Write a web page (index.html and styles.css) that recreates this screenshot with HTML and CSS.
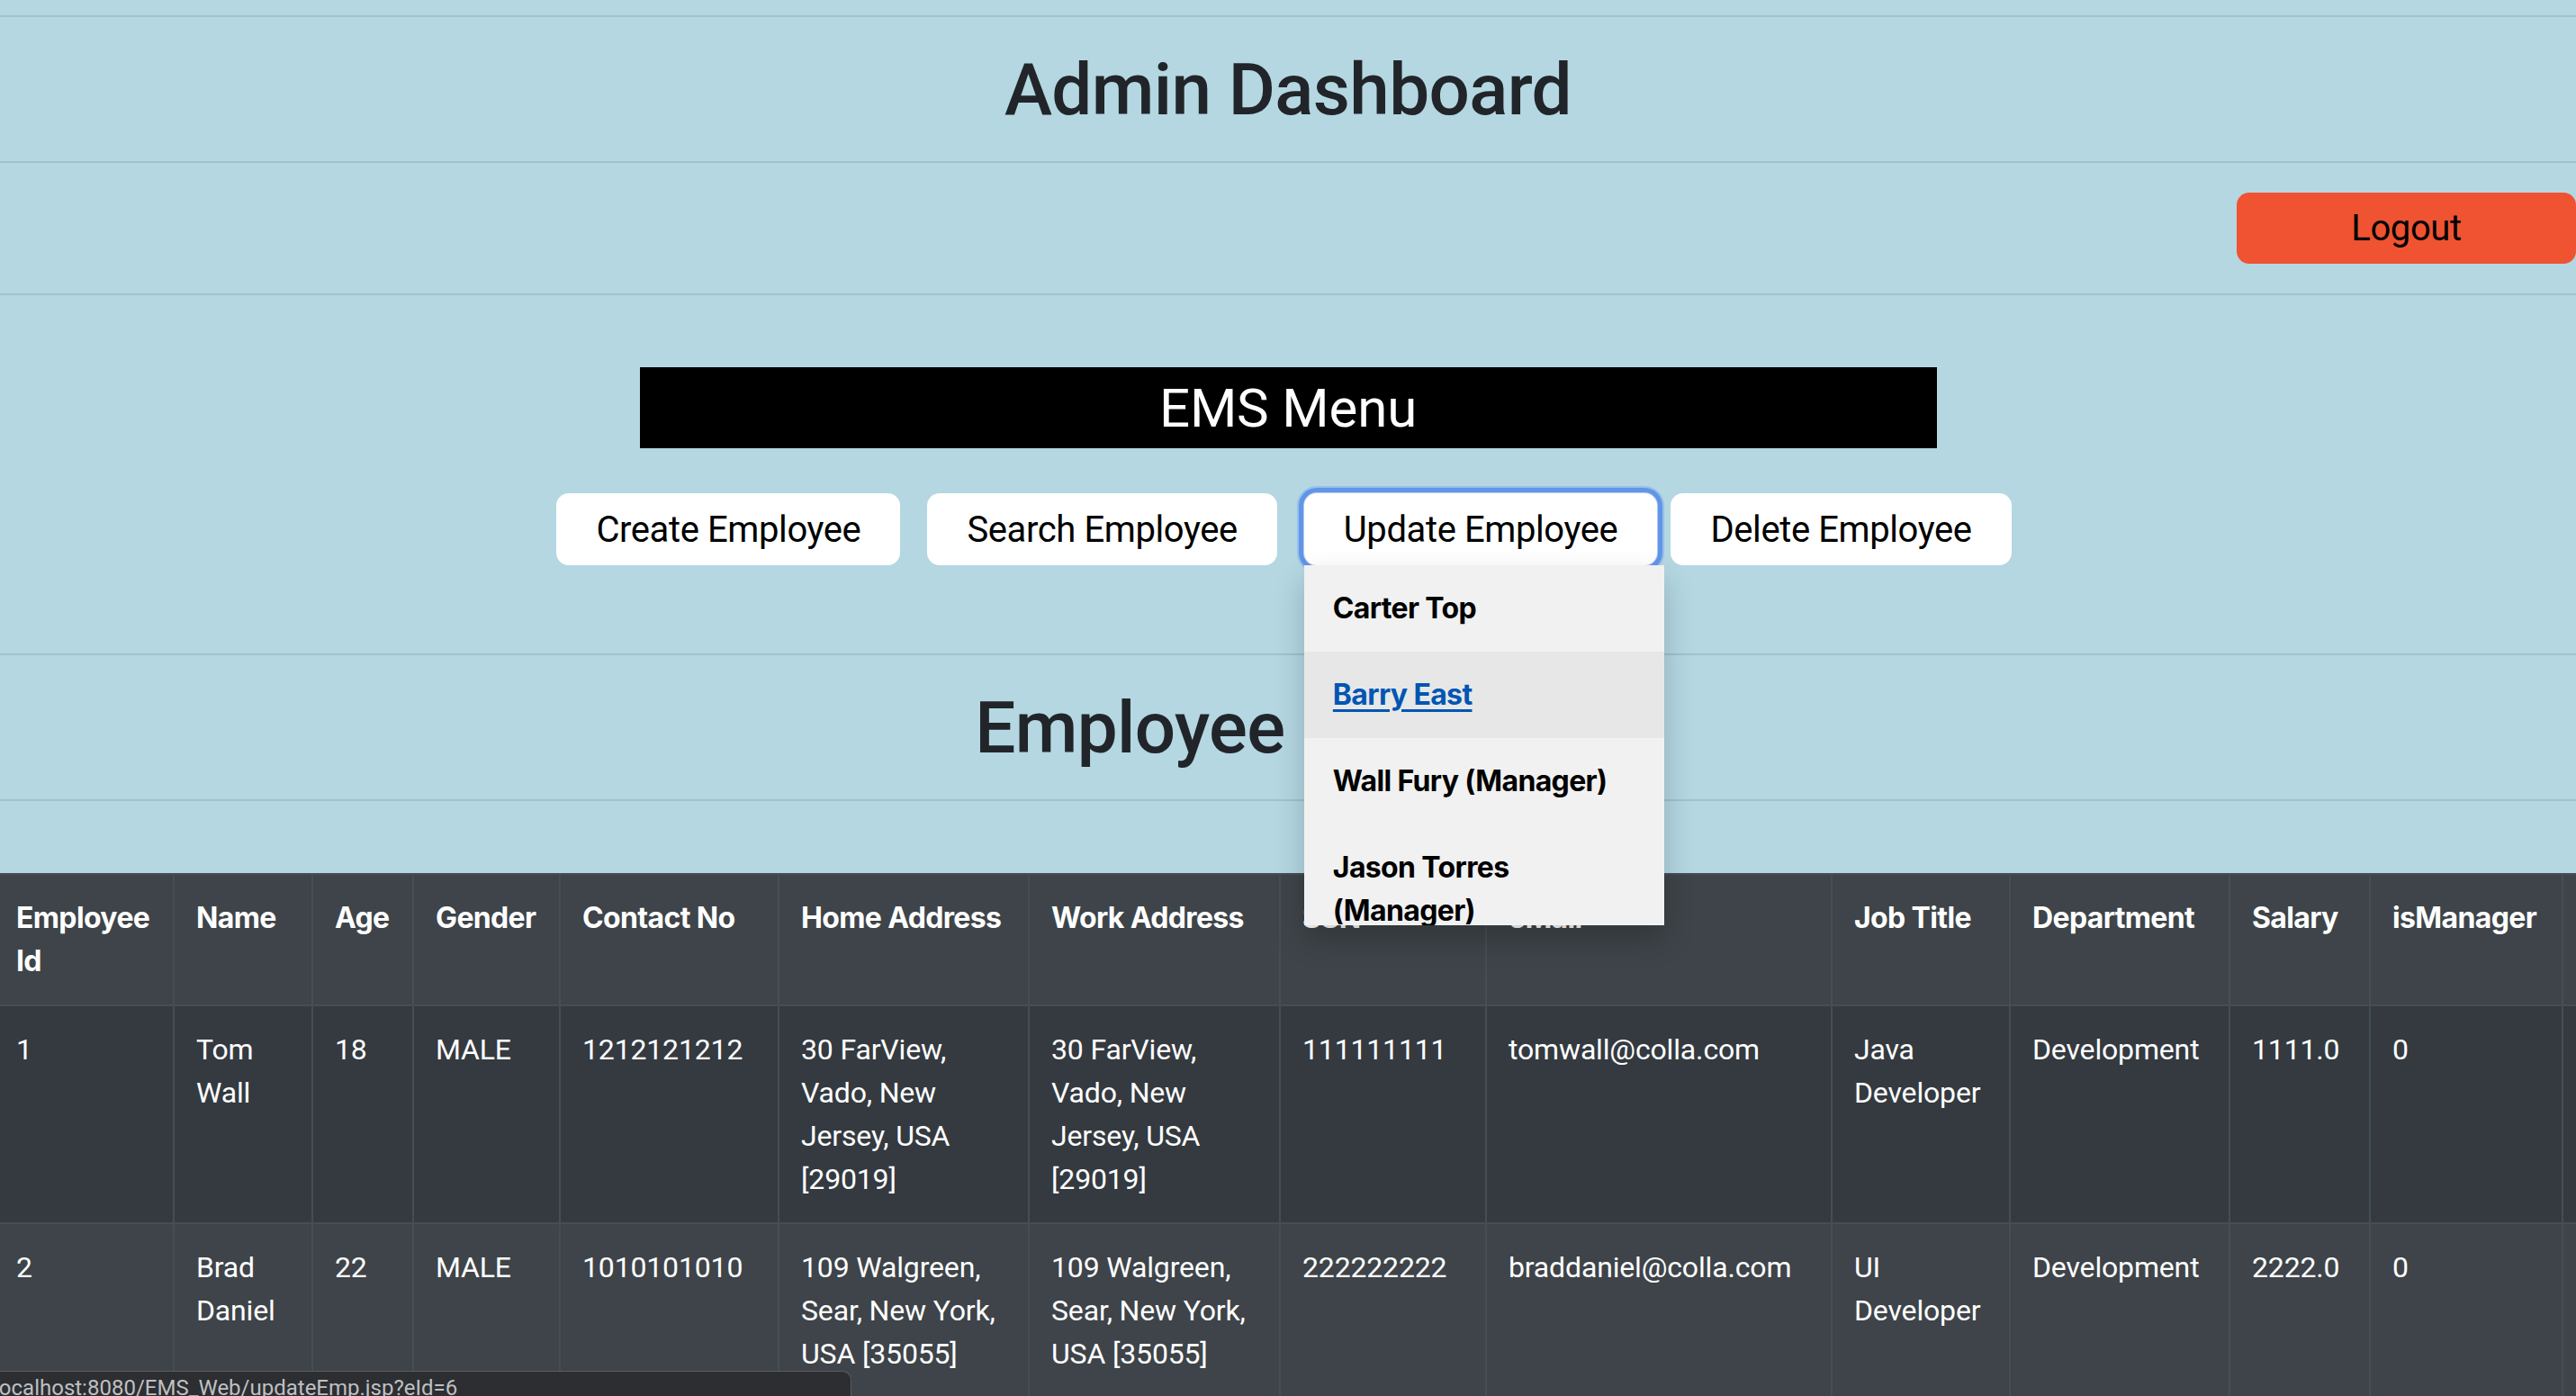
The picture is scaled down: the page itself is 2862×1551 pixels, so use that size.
FILE: index.html
```html
<!DOCTYPE html>
<html lang="en">
<head>
<meta charset="utf-8">
<title>Admin Dashboard</title>
<link rel="stylesheet" href="styles.css">
</head>
<body>
<hr class="rule rule-top">
<header class="title-row">
  <h1 class="page-title">Admin Dashboard</h1>
</header>
<hr class="rule">
<div class="logout-row">
  <button class="logout-btn" type="button">Logout</button>
</div>
<hr class="rule">
<section class="menu">
  <div class="menu-bar">EMS Menu</div>
  <div class="menu-buttons">
    <button class="menu-btn" type="button">Create Employee</button>
    <button class="menu-btn gap-l" type="button">Search Employee</button>
    <div class="dropdown gap-l">
      <button class="menu-btn is-focused" type="button">Update Employee</button>
      <div class="dropdown-list">
        <a class="dropdown-item" href="#">Carter Top</a>
        <a class="dropdown-item is-hover" href="#">Barry East</a>
        <a class="dropdown-item" href="#">Wall Fury (Manager)</a>
        <a class="dropdown-item" href="#">Jason Torres (Manager)</a>
        <a class="dropdown-item" href="#">Tom Wall</a>
        <a class="dropdown-item" href="#">Brad Daniel</a>
      </div>
    </div>
    <button class="menu-btn gap-s" type="button">Delete Employee</button>
  </div>
</section>
<hr class="rule">
<header class="title-row">
  <h2 class="page-title">Employee Database</h2>
</header>
<hr class="rule">
<div class="table-wrap">
  <table class="emp-table">
    <colgroup>
      <col style="width:200px"><col style="width:154px"><col style="width:112px"><col style="width:163px">
      <col style="width:243px"><col style="width:278px"><col style="width:279px"><col style="width:229px">
      <col style="width:384px"><col style="width:198px"><col style="width:244px"><col style="width:156px">
      <col style="width:214px"><col style="width:16px">
    </colgroup>
    <tbody>
      <tr>
        <th>Employee Id</th><th>Name</th><th>Age</th><th>Gender</th><th>Contact No</th>
        <th>Home Address</th><th>Work Address</th><th>SSN</th><th>eMail</th><th>Job Title</th>
        <th>Department</th><th>Salary</th><th>isManager</th><th></th>
      </tr>
      <tr>
        <td>1</td><td>Tom Wall</td><td>18</td><td>MALE</td><td>1212121212</td>
        <td>30 FarView, Vado, New Jersey, USA [29019]</td><td>30 FarView, Vado, New Jersey, USA [29019]</td>
        <td>111111111</td><td>tomwall@colla.com</td><td>Java Developer</td><td>Development</td>
        <td>1111.0</td><td>0</td><td></td>
      </tr>
      <tr>
        <td>2</td><td>Brad Daniel</td><td>22</td><td>MALE</td><td>1010101010</td>
        <td>109 Walgreen, Sear, New York, USA [35055]</td><td>109 Walgreen, Sear, New York, USA [35055]</td>
        <td>222222222</td><td>braddaniel@colla.com</td><td>UI Developer</td><td>Development</td>
        <td>2222.0</td><td>0</td><td></td>
      </tr>
    </tbody>
  </table>
</div>
<div class="status-bubble">localhost:8080/EMS_Web/updateEmp.jsp?eId=6</div>
</body>
</html>
```

FILE: styles.css
```css
* { box-sizing: border-box; }

html, body {
  margin: 0;
  padding: 0;
}

body {
  width: 2862px;
  height: 1551px;
  overflow: hidden;
  background: #b4d7e2;
  color: #212529;
  font-family: Roboto, "Noto Sans", sans-serif;
  letter-spacing: -0.01em;
}

.rule {
  height: 0;
  margin: 0;
  border: 0;
  border-top: 2px solid #a1c1cc;
}

.rule-top { margin-top: 17px; }

.title-row {
  height: 160px;
  padding-top: 33px;
  text-align: center;
}

.page-title {
  margin: 0;
  font-size: 80px;
  font-weight: 500;
  line-height: 96px;
  letter-spacing: -0.008em;
}

.logout-row {
  display: flex;
  justify-content: flex-end;
  padding: 33px 0;
}

.logout-btn {
  width: 377px;
  height: 79px;
  border: 0;
  border-radius: 14px;
  background: #ef5331;
  color: #000;
  font-family: inherit;
  font-size: 40px;
  letter-spacing: -0.01em;
}

.menu { padding: 80px 0 98px; }

.menu-bar {
  width: 1441px;
  height: 90px;
  margin: 0 auto;
  display: flex;
  align-items: center;
  justify-content: center;
  background: #000;
  color: #fff;
  font-size: 60px;
}

.menu-buttons {
  display: flex;
  justify-content: center;
  margin-top: 50px;
  padding-right: 9px;
}

.menu-btn {
  height: 80px;
  padding: 0 44px;
  border: 0;
  border-radius: 14px;
  background: #fff;
  color: #000;
  font-family: inherit;
  font-size: 40px;
  letter-spacing: -0.01em;
  white-space: nowrap;
}

.gap-l { margin-left: 30px; }
.gap-s { margin-left: 15px; }

.dropdown { position: relative; }

.is-focused {
  box-shadow: 0 0 0 1px #b7ccef, 0 0 0 6px #6195e9, 0 0 0 8px rgba(97, 149, 233, 0.35);
}

.dropdown-list {
  position: absolute;
  top: 80px;
  left: 0;
  z-index: 10;
  width: 400px;
  height: 400px;
  overflow: hidden;
  background: #f1f1f1;
  box-shadow: 0 16px 32px rgba(0, 0, 0, 0.2);
}

.dropdown-item {
  display: block;
  padding: 24px 32px;
  color: #000;
  font-family: Inter, Roboto, sans-serif;
  font-size: 32px;
  font-weight: 700;
  line-height: 48px;
  letter-spacing: -0.02em;
  text-decoration: none;
}

.dropdown-item.is-hover {
  background: #e7e7e7;
  color: #0056b3;
  text-decoration: underline;
  text-decoration-thickness: 3px;
  text-underline-offset: 5px;
}

.table-wrap {
  margin-top: 80px;
  overflow: hidden;
}

.emp-table {
  width: 2870px;
  margin-left: -8px;
  table-layout: fixed;
  border-collapse: collapse;
  background: #343a40;
  color: #fff;
  font-size: 32px;
  line-height: 48px;
}

.emp-table th,
.emp-table td {
  padding: 24px;
  border: 2px solid #454d55;
  text-align: left;
  vertical-align: top;
}

.emp-table th {
  font-family: Inter, Roboto, sans-serif;
  font-weight: 700;
  letter-spacing: -0.02em;
}

.emp-table tr:nth-child(odd) { background: #3e4449; }

.status-bubble {
  position: fixed;
  left: 0;
  bottom: -14px;
  z-index: 20;
  width: 946px;
  height: 42px;
  padding-top: 3px;
  overflow: hidden;
  background: #2c2e32;
  border-top: 1px solid #5a5c60;
  border-right: 1px solid #5a5c60;
  border-top-right-radius: 10px;
  color: #bfc0c2;
  font-size: 24px;
  line-height: 30px;
  letter-spacing: 0;
  text-indent: -7px;
  white-space: nowrap;
}
```
